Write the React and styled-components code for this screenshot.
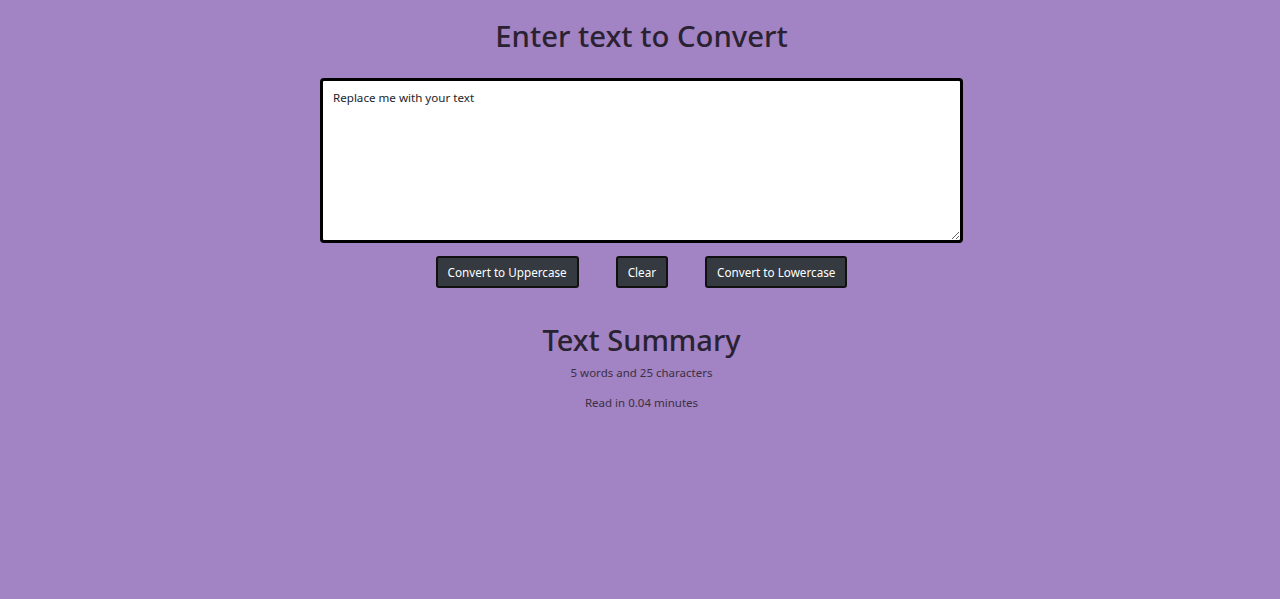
import React, { useState } from "react";
import styled, { createGlobalStyle } from "styled-components";

const Global = createGlobalStyle`
  html, body { margin: 0; padding: 0; }
  body {
    background: #a283c4;
    font-family: "Noto Sans", "Open Sans", sans-serif;
    color: #2a2231;
    height: 599px;
    overflow: hidden;
  }
`;

const Page = styled.main`
  display: flex;
  flex-direction: column;
  align-items: center;
  padding: 17px 0 0 3px;
`;

const Heading = styled.h2`
  margin: 0;
  font-size: 29.3px;
  font-weight: 500;
  line-height: 38px;
  color: #2a2231;
`;

const TextBox = styled.textarea`
  box-sizing: border-box;
  margin-top: 23px;
  width: 643px;
  height: 165px;
  border: 3px solid #000;
  border-radius: 4px;
  background: #fff;
  padding: 8px 10px;
  font-family: "Noto Sans", "Open Sans", sans-serif;
  font-size: 11.6px;
  line-height: 18px;
  color: #212529;
  resize: both;
  outline: none;
`;

const ButtonRow = styled.div`
  display: flex;
  gap: 37px;
  margin-top: 13px;
`;

const Button = styled.button`
  box-sizing: border-box;
  height: 32px;
  padding: 0 10px;
  background: #343a40;
  color: #fff;
  border: 2px solid #111;
  border-radius: 3px;
  font-family: "Noto Sans", "Open Sans", sans-serif;
  font-size: 11.7px;
  cursor: pointer;
`;

const SummaryTitle = styled.h2`
  margin: 33px 0 0;
  font-size: 29px;
  font-weight: 500;
  line-height: 38px;
  color: #2a2231;
`;

const Info = styled.p`
  margin: ${(p) => p.$top}px 0 0;
  font-size: 11.5px;
  line-height: 18px;
  color: #3a3042;
`;

export default function App() {
  const [text, setText] = useState("Replace me with your text");
  const words = text.split(/\s+/).filter(Boolean).length;
  return (
    <>
      <Global />
      <Page>
        <Heading>Enter text to Convert</Heading>
        <TextBox value={text} onChange={(e) => setText(e.target.value)} />
        <ButtonRow>
          <Button onClick={() => setText(text.toUpperCase())}>Convert to Uppercase</Button>
          <Button onClick={() => setText("")}>Clear</Button>
          <Button onClick={() => setText(text.toLowerCase())}>Convert to Lowercase</Button>
        </ButtonRow>
        <SummaryTitle>Text Summary</SummaryTitle>
        <Info $top={5}>
          {words} words and {text.length} characters
        </Info>
        <Info $top={12}>Read in {(0.008 * words).toFixed(2)} minutes</Info>
      </Page>
    </>
  );
}
